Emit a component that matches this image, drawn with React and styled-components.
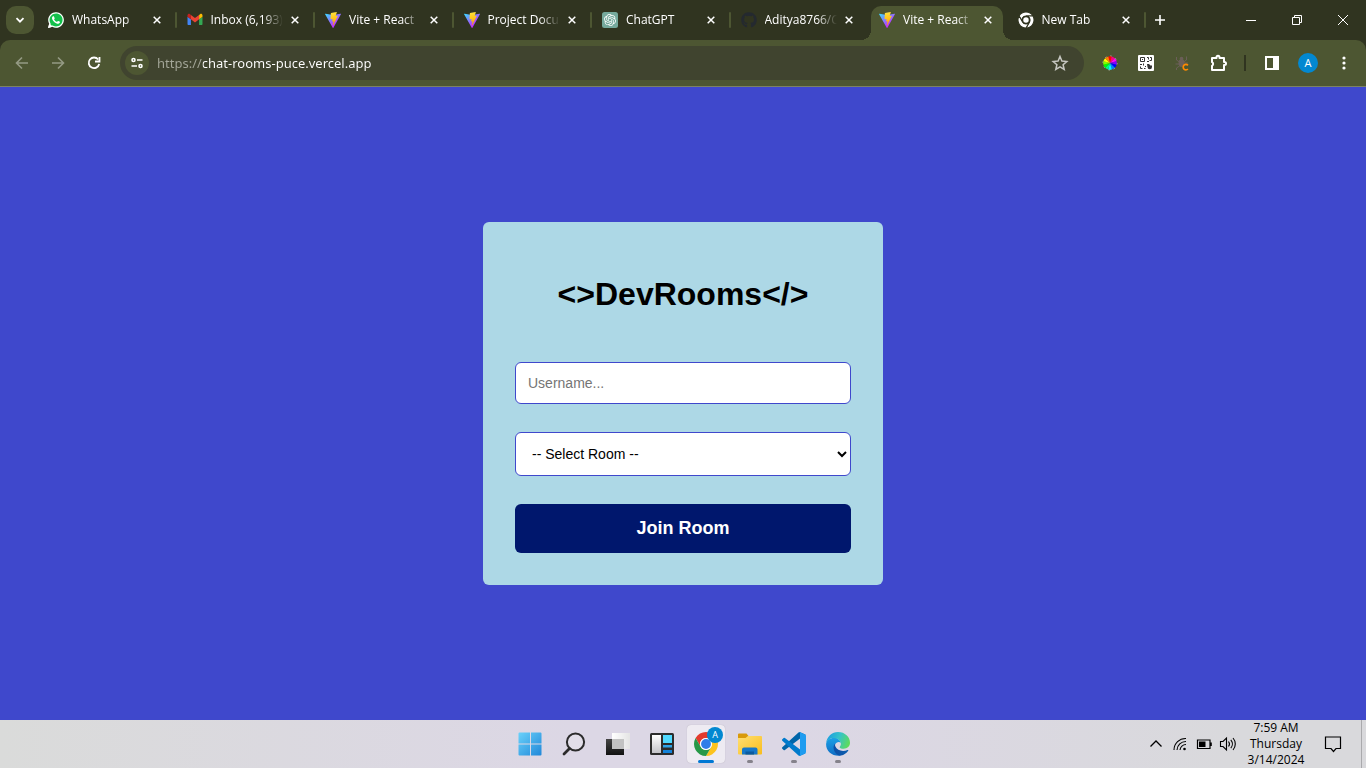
import React from "react";
import styled, { createGlobalStyle } from "styled-components";
import { FaGithub, FaWhatsapp } from "react-icons/fa";
import { SiOpenai } from "react-icons/si";

const GlobalStyle = createGlobalStyle`
  *, *::before, *::after { box-sizing: border-box; }
  body { margin: 0; }
  button { border: 0; padding: 0; background: none; color: inherit; font: inherit; cursor: pointer; }
  svg { display: block; flex: none; }
`;

const uiFont = `"Open Sans", "Noto Sans", sans-serif`;
const color = {
  frame: "#303420",
  toolbar: "#4d5632",
  field: "#40442f",
  page: "#3f48cc",
  card: "#add8e6",
  navy: "#00176d",
  accent: "#0078d4",
};

const Screen = styled.div`
  min-height: 100vh;
  display: flex;
  flex-direction: column;
  font-family: ${uiFont};
`;

/* ---------- Tab strip ---------- */

const TabStrip = styled.header`
  display: flex;
  height: 40px;
  padding-left: 6px;
  background: ${color.frame};
  color: #fff;
`;

const TabSearch = styled.button`
  flex: none;
  display: grid;
  place-items: center;
  width: 28px;
  height: 28px;
  margin: 6px 4px 0 0;
  border-radius: 10px;
  background: ${color.toolbar};
`;

const TabList = styled.div`
  flex: 0 1 1108px;
  min-width: 0;
  display: flex;
`;

const TabSlot = styled.div`
  flex: 1 1 0;
  min-width: 0;
  display: flex;
  align-items: center;
  gap: 3px;
  padding-left: 2px;
`;

const TabDivider = styled.span`
  width: 2px;
  height: 16px;
  border-radius: 1px;
  background: ${(p) => (p.$hidden ? "transparent" : color.toolbar)};
`;

const TabBody = styled.div`
  position: relative;
  flex: 1;
  min-width: 0;
  align-self: flex-end;
  display: flex;
  align-items: center;
  gap: 8px;
  height: 34px;
  padding: 0 7px 6px 8px;
  border-radius: 10px 10px 0 0;
  background: ${(p) => (p.$active ? color.toolbar : "transparent")};

  &::before,
  &::after {
    content: ${(p) => (p.$active ? '""' : "none")};
    position: absolute;
    bottom: 0;
    width: 10px;
    height: 10px;
  }
  &::before {
    right: 100%;
    background: radial-gradient(circle at 0 0, transparent 10px, ${color.toolbar} 10px);
  }
  &::after {
    left: 100%;
    background: radial-gradient(circle at 100% 0, transparent 10px, ${color.toolbar} 10px);
  }
`;

const TabTitle = styled.span`
  flex: 1;
  min-width: 0;
  margin-right: -6px;
  overflow: hidden;
  white-space: nowrap;
  font-size: 12px;
  line-height: 18px;
  mask-image: linear-gradient(to right, #000 calc(100% - 22px), transparent calc(100% - 2px));
`;

const CloseTab = styled.button`
  display: grid;
  place-items: center;
  width: 16px;
  height: 16px;
`;

const NewTabButton = styled.button`
  display: grid;
  place-items: center;
  flex: none;
  width: 28px;
  height: 40px;
`;

const WindowControls = styled.div`
  display: flex;
  margin-left: auto;
`;

const WindowButton = styled.button`
  display: grid;
  place-items: center;
  width: 46px;
  height: 40px;
`;

/* ---------- Toolbar ---------- */

const ToolbarFrame = styled.div`
  background: ${color.frame};
`;

const Toolbar = styled.div`
  display: flex;
  align-items: center;
  gap: 8px;
  height: 47px;
  padding: 0 8px;
  border-bottom: 1px solid #7b8263;
  border-radius: 10px 10px 0 0;
  background: ${color.toolbar};
  color: #fff;
`;

const ToolButton = styled.button`
  flex: none;
  display: grid;
  place-items: center;
  width: 28px;
  height: 28px;
  color: ${(p) => (p.$dim ? "#949a84" : "#fff")};
`;

const Omnibox = styled.form`
  flex: 1;
  min-width: 0;
  display: flex;
  align-items: center;
  gap: 8px;
  height: 34px;
  margin: 0 4px;
  padding: 0 10px 0 5px;
  border-radius: 17px;
  background: ${color.field};
`;

const SiteInfo = styled.button`
  display: grid;
  place-items: center;
  width: 24px;
  height: 24px;
  border-radius: 50%;
  background: ${color.toolbar};
`;

const Address = styled.input`
  flex: 1;
  min-width: 0;
  border: 0;
  outline: 0;
  padding: 0;
  font-family: "Noto Sans", "Open Sans", sans-serif;
  font-size: 13px;
  line-height: 20px;
  color: transparent;
  caret-color: #fff;
  background: linear-gradient(to right, #a4a799 46px, #fff 46px) text;
`;

const ToolDivider = styled.span`
  width: 2px;
  height: 16px;
  margin: 0 4px;
  background: ${color.frame};
`;

const Avatar = styled.span`
  display: grid;
  place-items: center;
  width: 20px;
  height: 20px;
  border-radius: 50%;
  background: #0288d1;
  color: #fff;
  font-size: 11px;
  line-height: 16px;
`;

/* ---------- Page ---------- */

const Page = styled.main`
  flex: 1;
  display: grid;
  place-items: center;
  background: ${color.page};
  font-family: "Liberation Sans", Arial, sans-serif;
`;

const Card = styled.section`
  width: 400px;
  max-width: 100%;
  padding: 32px;
  border-radius: 6px;
  background: ${color.card};
`;

const Title = styled.h1`
  margin: 22px 0 50px;
  font-size: 32px;
  line-height: 36px;
  text-align: center;
  color: #000;
`;

const JoinForm = styled.form`
  display: flex;
  flex-direction: column;
  gap: 28px;
`;

const fieldStyle = `
  width: 100%;
  padding: 12px;
  border: 1px solid ${color.page};
  border-radius: 6px;
  background: #fff;
  color: #000;
  font-family: inherit;
  font-size: 14px;
`;

const TextField = styled.input`
  ${fieldStyle}
  height: 42px;
  &::placeholder { color: #757575; }
`;

const RoomSelect = styled.select`
  ${fieldStyle}
  height: 44px;
`;

const JoinButton = styled.button`
  height: 49px;
  border-radius: 6px;
  background: ${color.navy};
  color: #fff;
  font-size: 18px;
  font-weight: 700;
`;

/* ---------- Taskbar ---------- */

const Taskbar = styled.footer`
  display: grid;
  grid-template-columns: 1fr auto 1fr;
  height: 48px;
  background: linear-gradient(to right, #dadbda, #dcd7e5 42%, #dcd7e5 58%, #d9d9dc 90%);
  color: #000;
`;

const AppRow = styled.nav`
  grid-column: 2;
  display: flex;
  align-items: center;
  gap: 6px;
  padding-left: 2px;
`;

const AppButton = styled.button`
  position: relative;
  display: grid;
  place-items: center;
  width: 38px;
  height: 38px;
  border-radius: 4px;
  background: ${(p) => (p.$active ? "#eeebf2" : "transparent")};
  box-shadow: ${(p) => (p.$active ? "0 0 1px #aaa5b2" : "none")};

  &::after {
    content: ${(p) => (p.$running ? '""' : "none")};
    position: absolute;
    bottom: 0;
    width: ${(p) => (p.$active ? 16 : 6)}px;
    height: 3px;
    border-radius: 2px;
    background: ${(p) => (p.$active ? color.accent : "#85828b")};
  }
`;

const AppBadge = styled.span`
  position: absolute;
  top: 2px;
  right: 2px;
  display: grid;
  place-items: center;
  width: 16px;
  height: 16px;
  border-radius: 50%;
  background: #0288d1;
  color: #fff;
  font-size: 9px;
  line-height: 12px;
`;

const Tray = styled.div`
  grid-column: 3;
  justify-self: end;
  display: flex;
  align-items: center;
`;

const TrayButton = styled.button`
  display: grid;
  place-items: center;
  width: 24px;
  height: 48px;
`;

const Clock = styled.time`
  width: 72px;
  text-align: center;
  font-size: 12px;
  line-height: 16px;
`;

const NoticeButton = styled(TrayButton)`
  width: 42px;
`;

const ShowDesktop = styled.button`
  width: 5px;
  height: 48px;
  margin-left: 7px;
  border-left: 1px solid #aaaaad;
`;

/* ---------- Icons ---------- */

const Line = ({ size = 16, width = 2, box = 16, children }) => (
  <svg width={size} height={size} viewBox={`0 0 ${box} ${box}`} fill="none" stroke="currentColor" strokeWidth={width} aria-hidden="true">
    {children}
  </svg>
);

const CloseIcon = () => (
  <Line width={1.5}><path d="M4.700 4.700l6.600 6.600M11.300 4.700l-6.600 6.600" /></Line>
);

const ViteIcon = ({ id }) => (
  <svg width="16" height="16" viewBox="0 0 256 257" aria-hidden="true">
    <defs>
      <linearGradient id={`${id}-a`} x1="0" x2=".58" y1=".1" y2=".8">
        <stop offset="0" stopColor="#41D1FF" /><stop offset="1" stopColor="#BD34FE" />
      </linearGradient>
      <linearGradient id={`${id}-b`} x1=".43" x2=".55" y1="0" y2=".9">
        <stop offset="0" stopColor="#FFEA83" /><stop offset=".08" stopColor="#FFDD35" /><stop offset="1" stopColor="#FFA800" />
      </linearGradient>
    </defs>
    <path fill={`url(#${id}-a)`} d="M255.153 37.938L134.897 252.976c-2.483 4.44-8.862 4.466-11.382.048L.875 37.958c-2.746-4.814 1.371-10.646 6.827-9.67l120.385 21.517a6.537 6.537 0 0 0 2.322-.004l117.867-21.483c5.438-.991 9.574 4.796 6.877 9.62Z" />
    <path fill={`url(#${id}-b)`} d="M185.432.063L96.44 17.501a3.268 3.268 0 0 0-2.634 3.014l-5.474 92.456a3.268 3.268 0 0 0 3.997 3.378l24.777-5.718c2.318-.535 4.413 1.507 3.936 3.838l-7.361 36.047c-.495 2.426 1.782 4.5 4.151 3.78l15.304-4.649c2.372-.72 4.652 1.36 4.15 3.788l-11.698 56.621c-.732 3.542 3.979 5.473 5.943 2.437l1.313-2.028l72.516-144.72c1.215-2.423-.88-5.186-3.54-4.672l-25.505 4.922c-2.396.462-4.435-1.77-3.759-4.114l16.646-57.705c.677-2.35-1.37-4.583-3.769-4.113Z" />
  </svg>
);

const WhatsAppIcon = () => (
  <svg width="16" height="16" viewBox="0 0 16 16" aria-hidden="true">
    <circle cx="8" cy="8" r="7.4" fill="#13c14b" />
    <path d="M0 16l1.3-4.8 3.4 3.5z" fill="#fff" />
    <FaWhatsapp x="-1" y="-1" size={18} color="#fff" />
  </svg>
);

const GmailIcon = () => (
  <svg width="16" height="16" viewBox="49 31 94 94" aria-hidden="true">
    <path fill="#4285f4" d="M58 108h14V74L52 59v43c0 3.32 2.69 6 6 6" />
    <path fill="#34a853" d="M120 108h14c3.32 0 6-2.69 6-6V59l-20 15" />
    <path fill="#fbbc04" d="M120 48v26l20-15v-8c0-7.42-8.47-11.65-14.4-7.2" />
    <path fill="#ea4335" d="M72 74V48l24 18 24-18v26L96 92" />
    <path fill="#c5221f" d="M52 51v8l20 15V48l-5.6-4.2c-5.94-4.45-14.4-.22-14.4 7.2" />
  </svg>
);

const ChatGptIcon = () => (
  <svg width="16" height="16" viewBox="0 0 16 16" aria-hidden="true">
    <rect width="16" height="16" rx="2.5" fill="#75a99c" />
    <SiOpenai x="2" y="2" size={12} color="#fff" />
  </svg>
);

const sector = "M24 13H43.05A22 22 0 0 0 4.95 13L14.47 29.5A11 11 0 0 1 24 13Z";

const ChromeIcon = ({ size, colors, center, ring, gap = 0 }) => (
  <svg width={size} height={size} viewBox="2 2 44 44" aria-hidden="true">
    {colors.map((fill, i) => (
      <path key={i} d={sector} fill={fill} stroke={ring} strokeWidth={gap} transform={`rotate(${i * 120} 24 24)`} />
    ))}
    <circle cx="24" cy="24" r="11" fill={gap ? ring : "#fff"} />
    <circle cx="24" cy="24" r={gap ? 7.5 : 9} fill={center} />
  </svg>
);

const MonoChromeIcon = () => (
  <ChromeIcon size={16} colors={["#fff", "#fff", "#fff"]} center="#fff" ring={color.frame} gap={3} />
);

const ColorWheelIcon = () => (
  <svg width="16" height="16" viewBox="0 0 16 16" aria-hidden="true">
    <circle cx="8" cy="8" r="7" fill="none" stroke="#b9bbae" strokeWidth="1" strokeDasharray="1.500 4" />
    {Array.from({ length: 12 }, (_, i) => (
      <path key={i} d="M8 8L6.200 1.400A6.800 6.800 0 0 1 9.800 1.400Z" fill={`hsl(${360 - i * 30} 100% 50%)`} transform={`rotate(${i * 30} 8 8)`} />
    ))}
  </svg>
);

const QrIcon = () => (
  <svg width="16" height="16" viewBox="0 0 16 16" aria-hidden="true">
    <rect width="16" height="16" rx="1" fill="#fff" />
    <path fill="none" stroke="#333" d="M2.5 2.5h4v4h-4zM9 2.5h1.5v2M12 2.5h1.500v3h-2M9 6.500h2M2 9.500h2M5.500 8.500v2M2.500 11.500v2h2M6 13.500h1.500M7 11.500h1" />
    <path fill="#333" d="M4 4h1v1H4zM9 9h2l1.500 1.500H14V12a2.200 2.200 0 0 1-4.500 0z" />
  </svg>
);

const BugIcon = () => (
  <svg width="16" height="16" viewBox="0 0 16 16" aria-hidden="true">
    <ellipse cx="7.500" cy="8" rx="3" ry="4" fill="#6b5f58" />
    <circle cx="7.500" cy="3.500" r="1.800" fill="#6b5f58" />
    <path d="M5.500 7L2.500 5V2M9.500 7l3-2V1.500M5.500 9H1.500M9.500 8h4.500M5.500 11l-3 2v2" fill="none" stroke="#6b5f58" />
    <path d="M13.900 10.300a2.700 2.700 0 1 0 0 3.700" fill="none" stroke="#ff8a00" strokeWidth="1.700" />
  </svg>
);

const PuzzleIcon = () => (
  <Line size={18} box={18}>
    <path strokeLinejoin="round" d="M3 4h4.500V3.200a1.500 1.500 0 0 1 3 0V4H15v4h.5a1.500 1.500 0 0 1 0 3H15v5H3v-4.200a2 2 0 0 0 0-3.600z" />
  </Line>
);

const WindowsIcon = () => (
  <svg width="24" height="24" viewBox="0 0 24 24" aria-hidden="true">
    <defs>
      <linearGradient id="win" x1="0" y1="0" x2="24" y2="24" gradientUnits="userSpaceOnUse">
        <stop stopColor="#6bd3fb" /><stop offset="1" stopColor="#1f86d8" />
      </linearGradient>
    </defs>
    <path fill="url(#win)" d="M1.500.500h10.500v11H.500v-10a1 1 0 0 1 1-1zM13 .500h9.500a1 1 0 0 1 1 1v10H13zM.500 12.500H12v11H1.500a1 1 0 0 1-1-1zM13 12.500h10.500v10a1 1 0 0 1-1 1H13z" />
  </svg>
);

const SearchIcon = () => (
  <svg width="24" height="24" viewBox="0 0 24 24" fill="none" stroke="#2b2b2b" aria-hidden="true">
    <circle cx="13.500" cy="10" r="8.600" strokeWidth="2" fill="#ece9f0" fillOpacity=".4" />
    <path d="M7.500 16.500L2 22" strokeWidth="2.800" strokeLinecap="round" />
  </svg>
);

const TaskViewIcon = () => (
  <svg width="24" height="24" viewBox="0 0 24 24" aria-hidden="true">
    <defs>
      <linearGradient id="tvd" x1="0" y1="0" x2="0" y2="1"><stop stopColor="#454545" /><stop offset="1" stopColor="#111" /></linearGradient>
      <linearGradient id="tvl"><stop stopColor="#fff" /><stop offset="1" stopColor="#e4e4e4" /></linearGradient>
    </defs>
    <path fill="url(#tvd)" d="M0 7h18v16H0z" />
    <path fill="url(#tvl)" d="M6 1h18v16H6z" />
    <path fill="#c2c2c2" d="M6 7h12v10H6z" />
  </svg>
);

const WidgetsIcon = () => (
  <svg width="24" height="24" viewBox="0 0 24 24" aria-hidden="true">
    <defs>
      <linearGradient id="wdg" x1="0" y1="0" x2="0" y2="1"><stop stopColor="#fff" /><stop offset="1" stopColor="#c3c3c8" /></linearGradient>
    </defs>
    <rect y="1" width="24" height="22" rx="1.500" fill="#2c2c2c" />
    <path fill="url(#wdg)" d="M2 3h9v18H2z" />
    <path fill="#50d9ff" d="M13 3h9v8h-9z" />
    <path fill="#2fa4e8" d="M13 13h9v2.500h-9z" />
    <path fill="#1482d8" d="M13 18h9v3h-9z" />
  </svg>
);

const FolderIcon = () => (
  <svg width="24" height="24" viewBox="0 0 24 24" aria-hidden="true">
    <defs>
      <linearGradient id="fld" x1="0" y1="0" x2="1" y2="1"><stop stopColor="#ffdf73" /><stop offset="1" stopColor="#f9bd1c" /></linearGradient>
    </defs>
    <path fill="#d99a0b" d="M1 1.500h7.500l2 2.500L8 7H0V2.500a1 1 0 0 1 1-1z" />
    <path fill="url(#fld)" d="M0 6h7.500L10 4h13a1 1 0 0 1 1 1v16.500a1 1 0 0 1-1 1H1a1 1 0 0 1-1-1z" />
    <path fill="#1677c8" d="M4 22.500v-5a2 2 0 0 1 2-2h11.500a2 2 0 0 1 2 2v5z" />
    <path fill="#0b5a9e" d="M7.500 19.500h8.500v3H7.500z" />
  </svg>
);

const VsCodeIcon = () => (
  <svg width="24" height="24" viewBox="0 0 100 100" aria-hidden="true">
    <path fill="#0065a9" d="M96.500 10.700 75.900.9a6.200 6.200 0 0 0-7.100 1.200L1.300 63.600a4.200 4.200 0 0 0 0 6.200l5.500 5a4.200 4.200 0 0 0 5.300.2l81.200-61.600c2.700-2.100 6.600-.1 6.600 3.300v-.2c0-2.500-1.400-4.700-3.400-5.800z" />
    <path fill="#007acc" d="M96.500 89.300 75.900 99.200a6.200 6.200 0 0 1-7.100-1.200L1.300 36.400a4.200 4.200 0 0 1 0-6.200l5.500-5a4.200 4.200 0 0 1 5.300-.2l81.200 61.600c2.700 2.100 6.600.1 6.600-3.300v.2c0 2.400-1.400 4.700-3.400 5.800z" />
    <path fill="#1f9cf0" d="M75.900 99.100a6.200 6.200 0 0 1-7.100-1.200c2.300 2.300 6.200.7 6.200-2.600V4.700c0-3.300-3.900-4.900-6.200-2.600A6.200 6.200 0 0 1 75.900.9l20.600 9.900a6.200 6.200 0 0 1 3.500 5.600v67.200a6.200 6.200 0 0 1-3.500 5.600z" />
  </svg>
);

const EdgeIcon = () => (
  <svg width="24" height="24" viewBox="0 0 24 24" aria-hidden="true">
    <defs>
      <linearGradient id="edt" x1="0" y1=".3" x2="1" y2=".6"><stop stopColor="#1b9de2" /><stop offset=".5" stopColor="#35c3c8" /><stop offset="1" stopColor="#5fdc58" /></linearGradient>
      <linearGradient id="edl" x1="0" y1="0" x2="0" y2="1"><stop stopColor="#1ba0e6" /><stop offset="1" stopColor="#0f6cc4" /></linearGradient>
      <linearGradient id="edb" x1="0" y1="0" x2="1" y2="0"><stop stopColor="#0d4ea6" /><stop offset="1" stopColor="#0c5fae" /></linearGradient>
    </defs>
    <path fill="url(#edl)" d="M.100 12.500C.100 9 3.500 6 8 5.800c3.500 0 6 2 7 5-2-1.500-5-.6-6 1.700-1.500 4 .500 8.500 6 11.200C6 24.700.100 19 .100 12.500z" />
    <path fill="url(#edb)" d="M9.600 11.300c-2 1.500-2.400 4-1.800 6.200 1 3.800 4 6 7.200 6.100 3-.700 5.500-2.400 7.200-4.900.4-.6-.1-1-.7-.7-4.500 2-10.500.8-12.200-3.700-.4-1.100-.3-2.200.3-3z" />
    <path fill="url(#edt)" d="M.200 11C.900 4.700 6 .100 12 .100c7 0 12 5 12 10.700 0 3.700-2.900 5.900-6.300 5.900-2.800 0-4.300-.9-4-1.800.3-.7 1.200-1.100 1.200-2.900C14.900 8.800 11.800 6 7.700 6 4.300 6 1.400 8 .200 11z" />
  </svg>
);

/* ---------- Data ---------- */

const tabs = [
  { title: "WhatsApp", icon: <WhatsAppIcon /> },
  { title: "Inbox (6,193)", icon: <GmailIcon /> },
  { title: "Vite + React", icon: <ViteIcon id="v1" /> },
  { title: "Project Docu", icon: <ViteIcon id="v2" /> },
  { title: "ChatGPT", icon: <ChatGptIcon /> },
  { title: "Aditya8766/C", icon: <FaGithub size={16} color="#24292f" />, noDivider: true },
  { title: "Vite + React", icon: <ViteIcon id="v3" />, active: true, noDivider: true },
  { title: "New Tab", icon: <MonoChromeIcon /> },
];

const apps = [
  { name: "Start", icon: <WindowsIcon /> },
  { name: "Search", icon: <SearchIcon /> },
  { name: "Task View", icon: <TaskViewIcon /> },
  { name: "Widgets", icon: <WidgetsIcon /> },
  {
    name: "Google Chrome",
    icon: <ChromeIcon size={24} colors={["#e33b2e", "#fcc31e", "#279847"]} center="#2f7de9" />,
    badge: "A",
    running: true,
    active: true,
  },
  { name: "File Explorer", icon: <FolderIcon />, running: true },
  { name: "Visual Studio Code", icon: <VsCodeIcon />, running: true },
  { name: "Microsoft Edge", icon: <EdgeIcon />, running: true },
];

/* ---------- Sections ---------- */

const BrowserTabs = () => (
  <TabStrip>
    <TabSearch aria-label="Search tabs">
      <Line size={12} box={12} width={1.8}><path d="M2.500 4.200L6 7.700l3.500-3.500" /></Line>
    </TabSearch>
    <TabList>
      {tabs.map((tab, i) => (
        <TabSlot key={i}>
          <TabBody $active={tab.active}>
            {tab.icon}
            <TabTitle>{tab.title}</TabTitle>
            <CloseTab aria-label="Close tab"><CloseIcon /></CloseTab>
          </TabBody>
          <TabDivider $hidden={tab.noDivider} />
        </TabSlot>
      ))}
    </TabList>
    <NewTabButton aria-label="New tab">
      <Line width={1.6}><path d="M8 3v10M3 8h10" /></Line>
    </NewTabButton>
    <WindowControls>
      <WindowButton aria-label="Minimize">
        <Line size={10} box={10} width={1}><path d="M0 5.500h10" /></Line>
      </WindowButton>
      <WindowButton aria-label="Restore">
        <Line size={10} box={10} width={1}><path d="M.500 2.500h7v7h-7zM2.500 2.500v-2h7v7h-2" /></Line>
      </WindowButton>
      <WindowButton aria-label="Close">
        <Line size={10} box={10} width={1}><path d="M0 0l10 10M10 0L0 10" /></Line>
      </WindowButton>
    </WindowControls>
  </TabStrip>
);

const BrowserToolbar = () => (
  <ToolbarFrame>
    <Toolbar>
      <ToolButton $dim aria-label="Back">
        <Line width={1.6}><path d="M14 8H3M8 2.500L2.500 8 8 13.500" /></Line>
      </ToolButton>
      <ToolButton $dim aria-label="Forward">
        <Line width={1.6}><path d="M2 8h11M8 2.500L13.500 8 8 13.500" /></Line>
      </ToolButton>
      <ToolButton aria-label="Reload">
        <Line width={1.8}>
          <path d="M12.200 4.500A5.300 5.300 0 1 0 13.200 9" />
          <path d="M9 6.500h4.500V2" />
        </Line>
      </ToolButton>
      <Omnibox onSubmit={(e) => e.preventDefault()}>
        <SiteInfo type="button" aria-label="View site information">
          <Line size={14} box={14} width={1.6}>
            <circle cx="3.500" cy="4" r="1.500" /><path d="M7 4h5.500M1.500 10H7" /><circle cx="10.500" cy="10" r="1.500" />
          </Line>
        </SiteInfo>
        <Address aria-label="Address" defaultValue="https://chat-rooms-puce.vercel.app" />
        <ToolButton type="button" aria-label="Bookmark this tab">
          <Line size={18} box={18} width={1.5}>
            <path stroke="#c6c7c1" d="M9 2.500l1.900 4.600 4.900.4-3.700 3.200 1.100 4.800L9 12.900l-4.200 2.600 1.100-4.800-3.700-3.200 4.900-.4z" />
          </Line>
        </ToolButton>
      </Omnibox>
      <ToolButton aria-label="Color picker"><ColorWheelIcon /></ToolButton>
      <ToolButton aria-label="QR code"><QrIcon /></ToolButton>
      <ToolButton aria-label="Bug capture"><BugIcon /></ToolButton>
      <ToolButton aria-label="Extensions"><PuzzleIcon /></ToolButton>
      <ToolDivider />
      <ToolButton aria-label="Side panel">
        <Line><path d="M2 2h12v12H2z" /><path fill="currentColor" stroke="none" d="M9 2h5v12H9z" /></Line>
      </ToolButton>
      <ToolButton aria-label="Profile"><Avatar>A</Avatar></ToolButton>
      <ToolButton aria-label="Menu">
        <svg width="16" height="16" viewBox="0 0 16 16" fill="currentColor" aria-hidden="true">
          <circle cx="8" cy="3" r="1.600" /><circle cx="8" cy="8" r="1.600" /><circle cx="8" cy="13" r="1.600" />
        </svg>
      </ToolButton>
    </Toolbar>
  </ToolbarFrame>
);

const JoinPage = () => (
  <Page>
    <Card>
      <Title>{"<>DevRooms</>"}</Title>
      <JoinForm onSubmit={(e) => e.preventDefault()}>
        <TextField aria-label="Username" placeholder="Username..." />
        <RoomSelect aria-label="Room" defaultValue="">
          <option value="">-- Select Room --</option>
        </RoomSelect>
        <JoinButton>Join Room</JoinButton>
      </JoinForm>
    </Card>
  </Page>
);

const DesktopTaskbar = () => (
  <Taskbar>
    <AppRow>
      {apps.map((app) => (
        <AppButton key={app.name} aria-label={app.name} $running={app.running} $active={app.active}>
          {app.icon}
          {app.badge && <AppBadge>{app.badge}</AppBadge>}
        </AppButton>
      ))}
    </AppRow>
    <Tray>
      <TrayButton aria-label="Show hidden icons">
        <Line width={1.3}><path d="M2.500 10.500L8 5l5.500 5.500" /></Line>
      </TrayButton>
      <TrayButton aria-label="Network">
        <Line width={1.1}>
          <path d="M2 14A11.500 11.500 0 0 1 14 2.500M5 14a8.800 8.800 0 0 1 9-8.500M8 14a6 6 0 0 1 6-5.500" />
          <circle cx="12.500" cy="13" r="1.300" fill="currentColor" stroke="none" />
        </Line>
      </TrayButton>
      <TrayButton aria-label="Battery">
        <Line width={1.2}>
          <path d="M1.500 4h12.500v8.500H1.500zM15.200 6.500v3.500" />
          <path fill="currentColor" stroke="none" d="M3 5.500h6.500v5.500H3z" />
        </Line>
      </TrayButton>
      <TrayButton aria-label="Volume">
        <Line size={18} box={18} width={1.1}>
          <path d="M1.500 6.500H4l3.500-3.500v12L4 11.500H1.500zM9.500 6.500a4 4 0 0 1 0 5M11.800 4.800a6.500 6.500 0 0 1 0 8.400M14 3a9 9 0 0 1 0 12" />
        </Line>
      </TrayButton>
      <Clock dateTime="2024-03-14T07:59">7:59 AM<br />Thursday<br />3/14/2024</Clock>
      <NoticeButton aria-label="Notifications">
        <Line size={18} box={18} width={1.2}><path d="M1.500 2h15v11.500H12L9.500 16.500 7 13.500H1.500z" /></Line>
      </NoticeButton>
      <ShowDesktop aria-label="Show desktop" />
    </Tray>
  </Taskbar>
);

export default function App() {
  return (
    <Screen>
      <GlobalStyle />
      <BrowserTabs />
      <BrowserToolbar />
      <JoinPage />
      <DesktopTaskbar />
    </Screen>
  );
}
